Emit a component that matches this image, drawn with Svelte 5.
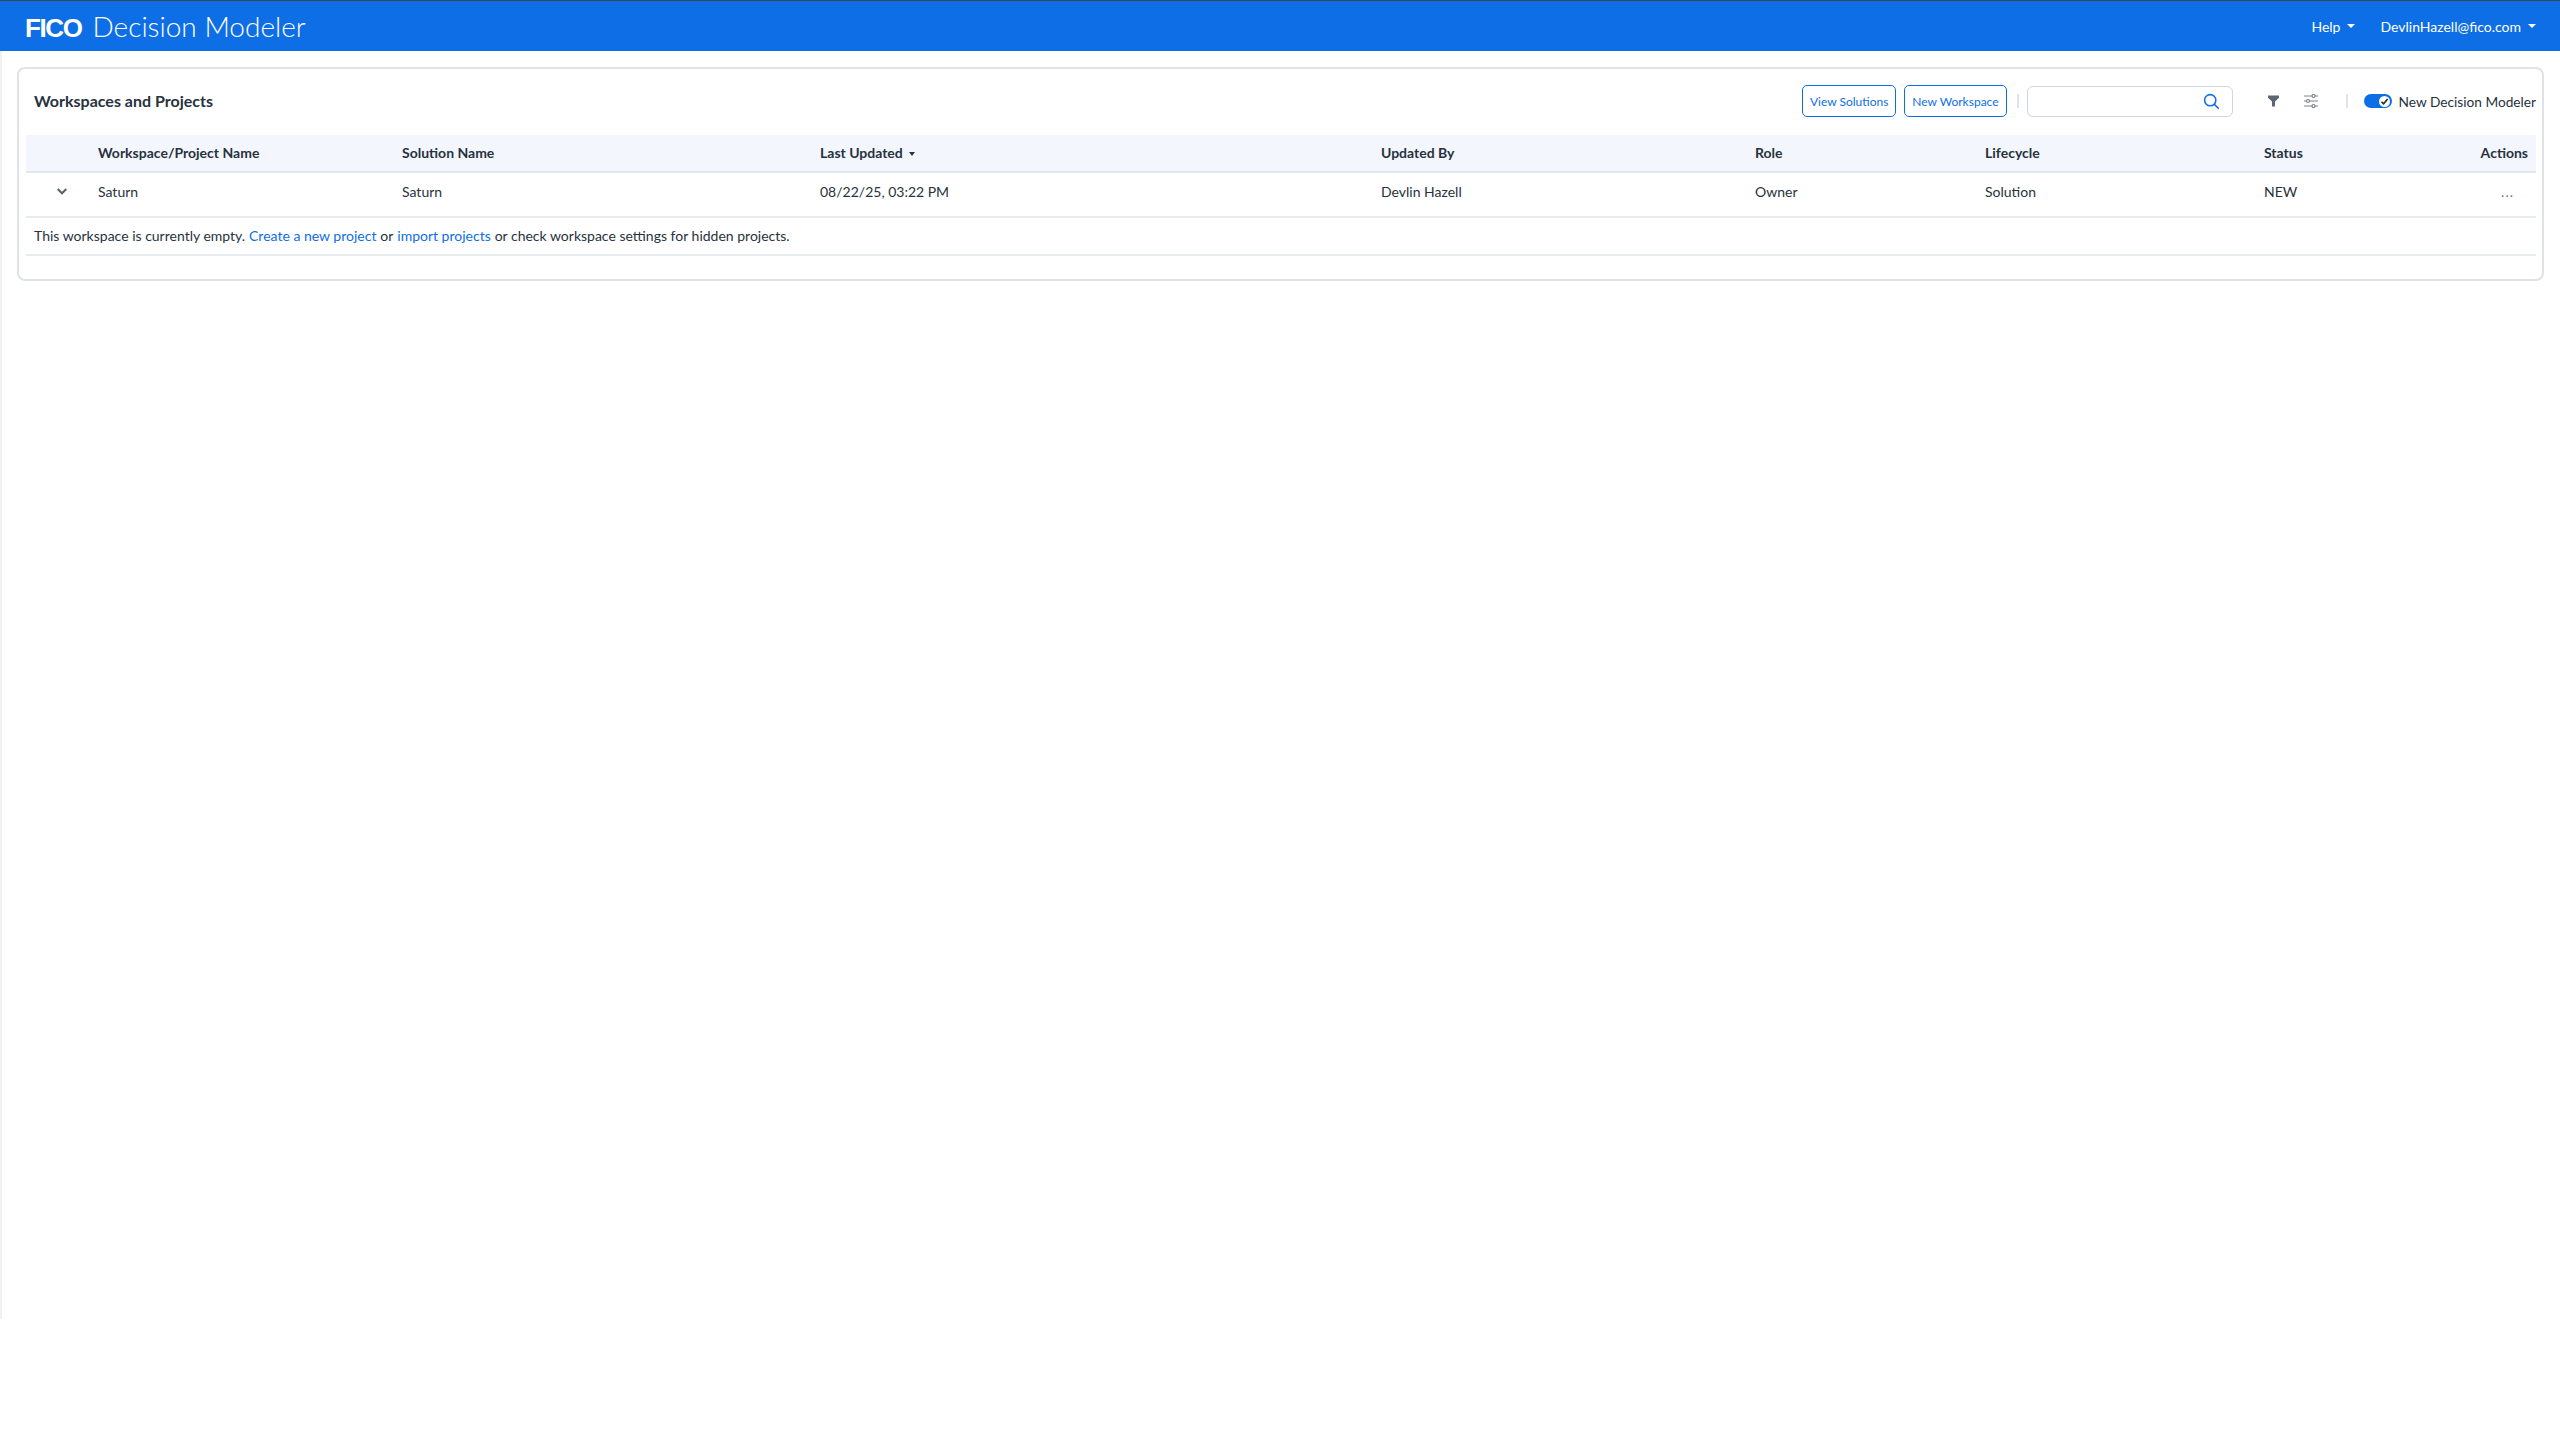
<script lang="ts">
  const columns = [
    { label: "Workspace/Project Name", value: "Saturn" },
    { label: "Solution Name", value: "Saturn" },
    { label: "Last Updated", value: "08/22/25, 03:22 PM", sorted: true },
    { label: "Updated By", value: "Devlin Hazell" },
    { label: "Role", value: "Owner" },
    { label: "Lifecycle", value: "Solution" },
    { label: "Status", value: "NEW" },
  ];
</script>

<div class="shell">
  <header class="topbar">
    <div class="brand">
      <span class="logo">FICO</span>
      <span class="product">Decision Modeler</span>
    </div>
    <nav class="topnav">
      <span class="navitem help">Help<i class="caret"></i></span>
      <span class="navitem">DevlinHazell@fico.com<i class="caret"></i></span>
    </nav>
  </header>

  <main class="content">
    <section class="card">
      <div class="toolbar">
        <h1>Workspaces and Projects</h1>
        <div class="tools">
          <button class="btn">View Solutions</button>
          <button class="btn">New Workspace</button>
          <span class="sep first"></span>
          <div class="search">
            <svg width="17" height="17" viewBox="0 0 20 20" fill="none" stroke="#0e6ee6" stroke-width="1.8" stroke-linecap="round">
              <circle cx="8.5" cy="8.5" r="6.6" />
              <path d="M13.4 13.4 18 18" />
            </svg>
          </div>
          <svg class="filter" width="11" height="12" viewBox="0 0 11 12">
            <path d="M0 0.5h11v2.2L7 6.4V11.5H4V6.4L0 2.7z" fill="#5b6672" />
          </svg>
          <svg class="sliders" width="14" height="14" viewBox="0 0 14 14" fill="none" stroke="#7b8590" stroke-width="1.2">
            <path d="M0 2h14M0 7h14M0 12h14" />
            <circle cx="9.5" cy="2" r="1.5" fill="#fff" />
            <circle cx="4" cy="7" r="1.5" fill="#fff" />
            <circle cx="9.5" cy="12" r="1.5" fill="#fff" />
          </svg>
          <span class="sep second"></span>
          <span class="toggle">
            <span class="knob">
              <svg width="9" height="9" viewBox="0 0 9 9" fill="none" stroke="#1c2733" stroke-width="1.6">
                <path d="M1.5 4.7 3.6 6.8 7.6 2" />
              </svg>
            </span>
          </span>
          <span class="toggle-label">New Decision Modeler</span>
        </div>
      </div>

      <div class="table">
        <div class="row head">
          <div></div>
          {#each columns as col}
            <div>
              {col.label}{#if col.sorted}<i class="caret dark"></i>{/if}
            </div>
          {/each}
          <div class="right">Actions</div>
        </div>
        <div class="row body">
          <div class="chev">
            <svg width="10" height="7" viewBox="0 0 10 7" fill="none" stroke="#56626e" stroke-width="2">
              <path d="M0.7 1 5 5.3 9.3 1" />
            </svg>
          </div>
          {#each columns as col}
            <div>{col.value}</div>
          {/each}
          <div class="right dots">...</div>
        </div>
        <div class="empty">
          This workspace is currently empty. <a href="#create">Create a new project</a> or
          <a href="#import">import projects</a> or check workspace settings for hidden projects.
        </div>
      </div>
    </section>
  </main>
</div>

<style>
  :global(body) {
    margin: 0;
    background: #fff;
    font-family: Lato, "Open Sans", sans-serif;
    color: #27323d;
  }

  .shell {
    height: 1319px;
    border-left: 2px solid #f1f1f1;
    box-sizing: border-box;
  }

  .topbar {
    margin-left: -2px;
    height: 51px;
    box-sizing: border-box;
    border-top: 1px solid #3a4654;
    background: #0e6ee6;
    color: #fff;
    display: flex;
    align-items: center;
    justify-content: space-between;
    padding: 0 24px 0 25px;
  }

  .brand {
    display: flex;
    align-items: baseline;
    gap: 11px;
  }

  .logo {
    font-family: "Liberation Sans", sans-serif;
    font-weight: 700;
    font-size: 26px;
    letter-spacing: -1.4px;
  }

  .product {
    font-size: 28px;
    font-weight: 300;
  }

  .topnav {
    display: flex;
    gap: 25px;
    font-size: 14px;
  }

  .navitem {
    display: inline-flex;
    align-items: center;
  }

  .caret {
    display: inline-block;
    margin-left: 7px;
    border-left: 4px solid transparent;
    border-right: 4px solid transparent;
    border-top: 4px solid #fff;
  }

  .caret.dark {
    border-top-color: #27323d;
    vertical-align: 2px;
    margin-left: 6px;
    border-width: 4px 3.5px 0;
  }

  .content {
    padding: 16px 16px 0 15px;
  }

  .card {
    height: 214px;
    box-sizing: border-box;
    border: 2px solid #dfe3e8;
    border-radius: 8px;
    padding: 0 6px 0 7px;
  }

  .toolbar {
    height: 66px;
    box-sizing: border-box;
    padding: 0 0 2px 8px;
    display: flex;
    align-items: center;
    justify-content: space-between;
  }

  h1 {
    margin: 0 0 1px;
    font-size: 16px;
    font-weight: 700;
  }

  .tools {
    display: flex;
    align-items: center;
    font-size: 14px;
  }

  .btn {
    height: 32px;
    padding: 0 7px;
    margin-right: 8px;
    font: inherit;
    font-size: 12px;
    color: #0e6ee6;
    background: #fff;
    border: 1.5px solid #0e6ee6;
    border-radius: 5px;
  }

  .sep {
    width: 2px;
    height: 14px;
    background: #dfe3e8;
  }

  .sep.first {
    margin: 0 8px 0 2px;
  }

  .sep.second {
    margin: 0 16px 0 28px;
  }

  .search {
    width: 206px;
    height: 31px;
    box-sizing: border-box;
    border: 1.5px solid #cfd6de;
    border-radius: 6px;
    display: flex;
    align-items: center;
    justify-content: flex-end;
    padding-right: 12px;
  }

  .filter {
    margin-left: 35px;
  }

  .sliders {
    margin-left: 25px;
  }

  .toggle {
    width: 28px;
    height: 14px;
    margin-right: 7px;
    border-radius: 7px;
    background: #0e6ee6;
    display: flex;
    align-items: center;
    justify-content: flex-end;
    padding-right: 2px;
    box-sizing: border-box;
  }

  .knob {
    width: 11px;
    height: 11px;
    border-radius: 50%;
    background: #fff;
    display: flex;
    align-items: center;
    justify-content: center;
  }

  .toggle-label {
    font-size: 13.7px;
  }

  .table {
    font-size: 14px;
  }

  .row {
    display: grid;
    grid-template-columns: 72px 304px 418px 561px 374px 230px 279px 1fr 80px;
    align-items: center;
  }

  .head {
    height: 38px;
    padding-bottom: 1px;
    background: #f3f7fd;
    border-bottom: 2px solid #e3e7ec;
    font-weight: 700;
    box-sizing: border-box;
  }

  .body {
    height: 45px;
    padding-bottom: 7px;
    border-bottom: 2px solid #e9ecef;
    box-sizing: border-box;
  }

  .right {
    text-align: right;
    padding-right: 8px;
  }

  .chev {
    display: flex;
    justify-content: flex-end;
    padding-right: 31px;
  }

  .dots {
    padding-right: 22px;
    letter-spacing: 1px;
    color: #6b7580;
  }

  .empty {
    height: 38px;
    padding: 0 0 1px 8px;
    display: flex;
    align-items: center;
    gap: 0.28em;
    border-bottom: 2px solid #e9ecef;
    box-sizing: border-box;
  }

  a {
    color: #0e6ee6;
    text-decoration: none;
  }
</style>
